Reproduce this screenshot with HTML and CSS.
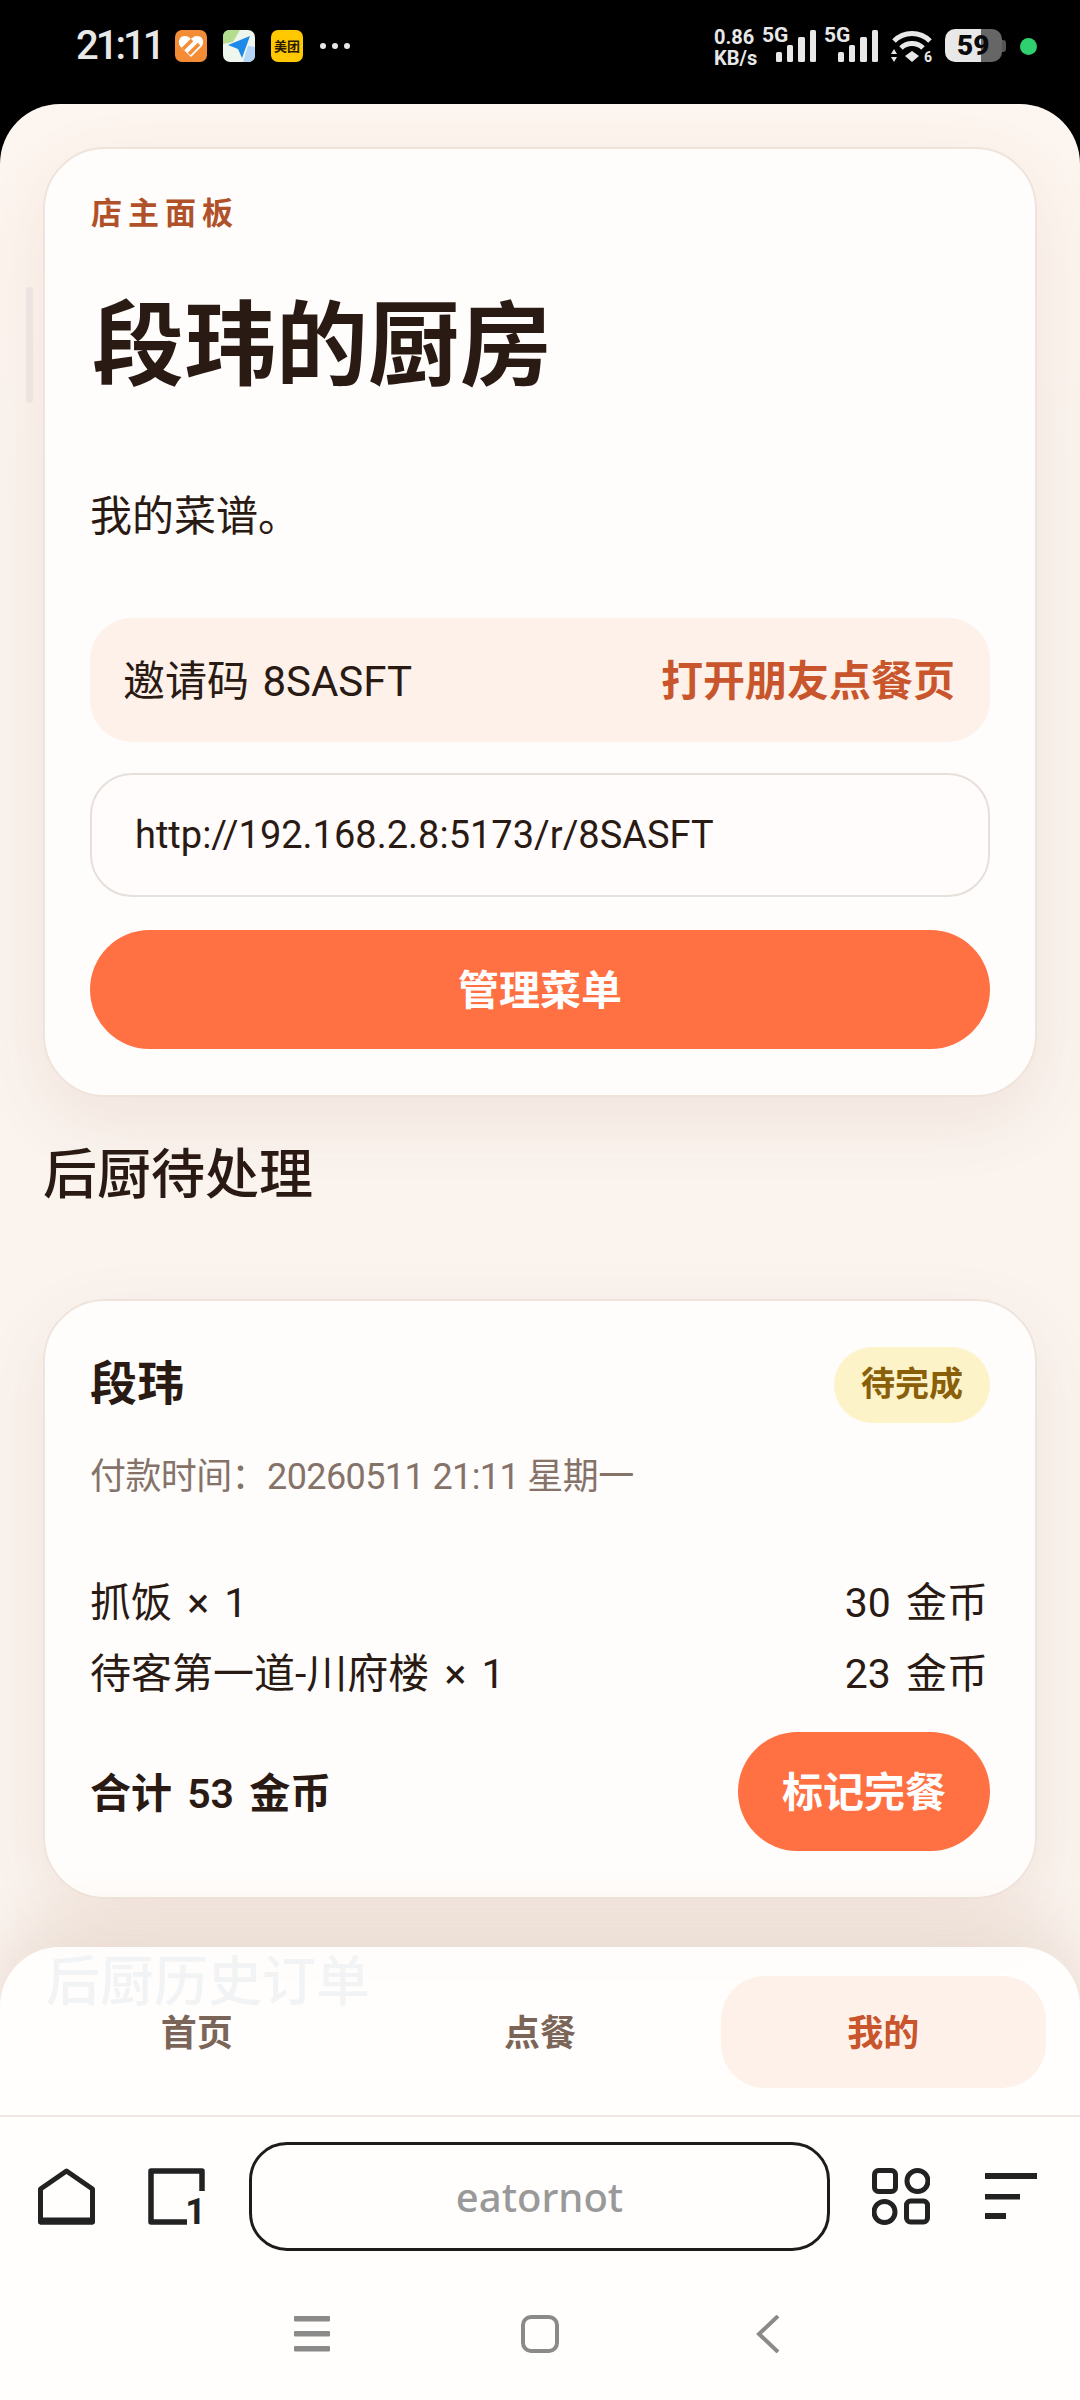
FILE: index.html
```html
<!DOCTYPE html>
<html lang="zh-CN">
<head>
  <meta charset="UTF-8">
  <meta name="viewport" content="width=device-width, initial-scale=1.0"/>
  <title>eatornot</title>
  <link rel="stylesheet" href="styles.css">
</head>
<body>

  <div class="status-bar">
    <div class="status-left">
      <span class="clock">21:11</span>
      <svg class="app-icon" viewBox="0 0 32 32">
        <rect width="32" height="32" rx="7" fill="#f48b35"/>
        <path d="M16 27 L5 16 C2 11 5 6 10 6 C13 6 15 8 16 9 C17 8 19 6 22 6 C27 6 30 11 27 16 Z" fill="#fff"/>
        <path d="M8 19 L17 10 M14 24 L24 14" stroke="#f48b35" stroke-width="3.5"/>
      </svg>
      <svg class="app-icon" viewBox="0 0 32 32">
        <rect width="32" height="32" rx="7" fill="#eef6ee"/>
        <path d="M0 7 Q0 0 7 0 H17 L10 12 L0 14 Z" fill="#b5dd8f"/>
        <path d="M20 32 L25 16 L32 17 V25 Q32 32 25 32 Z" fill="#b4d6f8"/>
        <path d="M5 15 L27 6 L19 28 L15 19 Z" fill="#1d8ae8"/>
      </svg>
      <div class="meituan">美团</div>
      <div class="more-dots"><i></i><i></i><i></i></div>
    </div>
    <div class="status-right">
      <div class="net-speed"><span>0.86</span><span>KB/s</span></div>
      <div class="sim">
        <span class="sim-label">5G</span>
        <svg class="signal" viewBox="0 0 41 32">
          <rect x="0" y="22" width="6" height="10" rx="1.5"/>
          <rect x="11" y="15" width="6" height="17" rx="1.5"/>
          <rect x="22" y="7" width="7" height="25" rx="1.5"/>
          <rect x="34" y="0" width="6" height="32" rx="1.5"/>
        </svg>
      </div>
      <div class="sim">
        <span class="sim-label">5G</span>
        <svg class="signal" viewBox="0 0 41 32">
          <rect x="0" y="22" width="6" height="10" rx="1.5"/>
          <rect x="11" y="15" width="6" height="17" rx="1.5"/>
          <rect x="22" y="7" width="7" height="25" rx="1.5"/>
          <rect x="34" y="0" width="6" height="32" rx="1.5"/>
        </svg>
      </div>
      <svg class="wifi" viewBox="0 0 44 38">
        <path d="M3 11 C13 1 29 1 39 11 M10 18 C16 12 26 12 32 18" fill="none" stroke="#e8e8e8" stroke-width="5"/>
        <path d="M21 21 L28 26 L21 32 L14 26 Z" fill="#e8e8e8"/>
        <path d="M3 19 L6 24 H0 Z M3 32 L0 27 H6 Z" fill="#e8e8e8"/>
        <text x="33" y="32" class="wifi-num">6</text>
      </svg>
      <div class="battery">
        <div class="battery-body"><span>59</span></div>
        <i class="battery-nub"></i>
      </div>
      <i class="green-dot"></i>
    </div>
  </div>

  <div class="web">
    <div class="scroll-ghost"></div>

    <section class="card owner-card">
      <p class="eyebrow">店主面板</p>
      <h1 class="title">段玮的厨房</h1>
      <p class="subtitle">我的菜谱。</p>
      <div class="invite">
        <span>邀请码 8SASFT</span>
        <a class="invite-link">打开朋友点餐页</a>
      </div>
      <div class="url-input">http://192.168.2.8:5173/r/8SASFT</div>
      <button class="primary-btn full">管理菜单</button>
    </section>

    <h2 class="section-title">后厨待处理</h2>

    <section class="card order-card">
      <div class="order-head">
        <span class="customer">段玮</span>
        <span class="badge">待完成</span>
      </div>
      <p class="paid-time">付款时间：20260511 21:11 星期一</p>
      <div class="order-lines">
        <div class="order-line"><span>抓饭 × 1</span><span>30 金币</span></div>
        <div class="order-line"><span>待客第一道-川府楼 × 1</span><span>23 金币</span></div>
      </div>
      <div class="order-foot">
        <span class="total">合计 53 金币</span>
        <button class="primary-btn done">标记完餐</button>
      </div>
    </section>

    <h2 class="section-title history">后厨历史订单</h2>

    <nav class="tabs">
      <a class="tab">首页</a>
      <a class="tab">点餐</a>
      <a class="tab active">我的</a>
    </nav>
  </div>

  <div class="browser-bar">
    <svg class="tool-icon home" viewBox="0 0 57 57">
      <path d="M28.5 3 L54.5 21 V54 H2.5 V21 Z" fill="none" stroke="#222" stroke-width="5" stroke-linejoin="round"/>
      <path d="M2 53 H55" stroke="#222" stroke-width="7"/>
    </svg>
    <svg class="tool-icon tabs-icon" viewBox="0 0 57 57">
      <path d="M39 54 H3 V3 H54 V23" fill="none" stroke="#222" stroke-width="5.5" stroke-linejoin="round"/>
      <text x="58" y="56" class="tabs-count">1</text>
    </svg>
    <div class="address">eatornot</div>
    <svg class="tool-icon grid" viewBox="0 0 58 57">
      <g fill="none" stroke="#222" stroke-width="5">
        <rect x="2.5" y="2.5" width="21" height="21" rx="4"/>
        <circle cx="45.5" cy="13" r="10.5"/>
        <circle cx="12.5" cy="44" r="10.5"/>
        <rect x="34.5" y="33" width="21" height="21" rx="4"/>
      </g>
    </svg>
    <svg class="tool-icon menu" viewBox="0 0 52 46">
      <rect x="0" y="0" width="52" height="6" fill="#222"/>
      <rect x="0" y="21" width="35" height="5.5" fill="#222"/>
      <rect x="0" y="40" width="21" height="6" fill="#222"/>
    </svg>
  </div>

  <div class="nav-bar">
    <div class="nav-cell">
      <svg class="nav-menu" viewBox="0 0 36 36">
        <rect y="0" width="36" height="5.5" rx="1" fill="#8a8a8a"/>
        <rect y="15" width="36" height="5.5" rx="1" fill="#8a8a8a"/>
        <rect y="30" width="36" height="5.5" rx="1" fill="#8a8a8a"/>
      </svg>
    </div>
    <div class="nav-cell">
      <svg class="nav-home" viewBox="0 0 38 38">
        <rect x="2" y="2" width="34" height="34" rx="8" fill="none" stroke="#8a8a8a" stroke-width="4"/>
      </svg>
    </div>
    <div class="nav-cell">
      <svg class="nav-back" viewBox="0 0 24 38">
        <path d="M22 1 L3 19 L22 37" fill="none" stroke="#8a8a8a" stroke-width="4"/>
      </svg>
    </div>
  </div>

</body>
</html>
```

FILE: styles.css
```css
:root {
  --ink: #2a1a14;
  --muted: #85736a;
  --accent: #ff7043;
  --accent-dark: #c9552d;
  --peach: #fdf1ea;
  --card: #fffdfb;
  --line: #efe4dc;
}

* {
  margin: 0;
  padding: 0;
  box-sizing: border-box;
}

body {
  width: 1080px;
  height: 2400px;
  overflow: hidden;
  background: #000;
  font-family: "Roboto", "Noto Sans CJK SC", sans-serif;
  color: var(--ink);
  display: flex;
  flex-direction: column;
}

/* status bar */
.status-bar {
  height: 104px;
  flex: none;
  display: flex;
  justify-content: space-between;
  padding: 27px 43px 0 76px;
  color: #e8e8e8;
}

.status-left {
  display: flex;
  align-items: flex-start;
}

.clock {
  font-family: "Roboto", sans-serif;
  font-size: 40px;
  font-weight: 500;
  letter-spacing: -3px;
  line-height: 38px;
  width: 99px;
}

.app-icon {
  width: 32px;
  height: 32px;
  margin: 3px 16px 0 0;
}

.meituan {
  width: 32px;
  height: 32px;
  margin-top: 3px;
  border-radius: 7px;
  background: #ffc800;
  color: #2a1a00;
  font-family: "Noto Sans CJK SC", sans-serif;
  font-size: 13px;
  font-weight: 700;
  line-height: 32px;
  text-align: center;
}

.more-dots {
  display: flex;
  gap: 6px;
  margin: 16px 0 0 17px;
}

.more-dots i {
  width: 6px;
  height: 6px;
  border-radius: 50%;
  background: #e8e8e8;
}

.status-right {
  display: flex;
  align-items: flex-start;
  font-family: "Roboto", sans-serif;
  font-weight: 700;
}

.net-speed {
  display: flex;
  flex-direction: column;
  font-size: 20px;
  line-height: 21px;
  width: 48px;
}

.sim {
  position: relative;
  width: 41px;
  height: 35px;
  margin-left: 14px;
}

.sim + .sim {
  margin-left: 21px;
}

.sim-label {
  position: absolute;
  left: -14px;
  top: 0;
  font-size: 21px;
  line-height: 17px;
}

.signal {
  position: absolute;
  left: 0;
  top: 3px;
  width: 41px;
  height: 32px;
  fill: #e8e8e8;
}

.wifi {
  width: 44px;
  height: 38px;
  margin: 3px -2px 0 12px;
}

.wifi-num {
  font-size: 14px;
  font-weight: 700;
  fill: #e8e8e8;
}

.battery {
  display: flex;
  align-items: center;
  margin: 2px 0 0 12px;
}

.battery-body {
  width: 57px;
  height: 33px;
  border-radius: 10px;
  background: linear-gradient(90deg, #e8e8e8 0 63%, #666 63% 100%);
  color: #0a0a0a;
  font-size: 28px;
  font-weight: 900;
  line-height: 33px;
  padding-left: 12px;
}

.battery-nub {
  width: 4px;
  height: 12px;
  border-radius: 0 3px 3px 0;
  background: #555;
}

.green-dot {
  width: 17px;
  height: 17px;
  margin: 11px 0 0 14px;
  border-radius: 50%;
  background: #2fd06f;
}

/* web view */
.web {
  position: relative;
  flex: none;
  height: 2013px;
  overflow: hidden;
  border-radius: 60px 60px 0 0;
  background: linear-gradient(180deg, #fdf5ef, #faf3ee 20%);
  padding: 43px 43px 0;
}

.scroll-ghost {
  position: absolute;
  left: 26px;
  top: 183px;
  width: 7px;
  height: 116px;
  border-radius: 4px;
  background: #efe9e6;
}

.card {
  position: relative;
  background: var(--card);
  border: 2px solid var(--line);
  border-radius: 62px;
  padding: 0 45px;
  box-shadow: 0 24px 70px rgba(150, 90, 50, 0.09);
}

.owner-card {
  height: 950px;
  padding-top: 44px;
}

.eyebrow {
  font-family: "Noto Sans CJK SC", sans-serif;
  font-size: 31px;
  font-weight: 700;
  letter-spacing: 6px;
  line-height: 40px;
  margin-left: 1px;
  margin-top: -2px;
  color: #b0512a;
}

.title {
  font-family: "Noto Sans CJK SC", sans-serif;
  font-size: 92px;
  font-weight: 700;
  line-height: 110px;
  margin-top: 52px;
  margin-left: 2px;
}

.subtitle {
  font-size: 42px;
  line-height: 60px;
  margin-top: 94px;
}

.invite {
  display: flex;
  justify-content: space-between;
  align-items: center;
  height: 124px;
  margin-top: 71px;
  padding: 0 35px 6px 33px;
  border-radius: 42px;
  background: var(--peach);
  font-size: 42px;
  word-spacing: 3px;
}

.invite-link {
  font-size: 42px;
  font-weight: 700;
  color: var(--accent-dark);
}

.url-input {
  display: flex;
  align-items: center;
  height: 124px;
  margin-top: 31px;
  padding-left: 43px;
  border: 2px solid #e6dfda;
  border-radius: 42px;
  background: #fffcfb;
  font-size: 38px;
}

.primary-btn {
  border: none;
  background: var(--accent);
  color: #fff;
  font-family: "Noto Sans CJK SC", sans-serif;
  font-size: 41px;
  font-weight: 700;
  padding-bottom: 5px;
}

.full {
  display: block;
  width: 100%;
  height: 119px;
  margin-top: 33px;
  border-radius: 60px;
}

.section-title {
  font-family: "Noto Sans CJK SC", sans-serif;
  font-size: 54px;
  font-weight: 500;
  line-height: 70px;
  margin-top: 39px;
}

.order-card {
  margin-top: 93px;
  height: 600px;
  padding-top: 46px;
}

.order-head {
  display: flex;
  justify-content: space-between;
  align-items: center;
}

.customer {
  font-family: "Noto Sans CJK SC", sans-serif;
  font-size: 47px;
  font-weight: 600;
  margin-top: -12px;
}

.badge {
  width: 156px;
  height: 76px;
  border-radius: 38px;
  background: #fdf3c8;
  color: #8a5f0a;
  font-size: 34px;
  font-weight: 600;
  line-height: 74px;
  text-align: center;
}

.paid-time {
  font-size: 36px;
  letter-spacing: -0.6px;
  line-height: 50px;
  margin-top: 29px;
  color: var(--muted);
}

.order-lines {
  display: flex;
  flex-direction: column;
  gap: 21px;
  margin-top: 76px;
}

.order-line {
  display: flex;
  justify-content: space-between;
  padding-right: 2px;
  font-size: 41px;
  line-height: 50px;
  word-spacing: 5px;
}

.order-foot {
  display: flex;
  justify-content: space-between;
  align-items: center;
  margin-top: 33px;
}

.total {
  font-size: 41px;
  font-weight: 600;
  word-spacing: 5px;
  padding-bottom: 4px;
}

.done {
  width: 252px;
  height: 119px;
  border-radius: 60px;
}

.history {
  margin-top: 44px;
  margin-left: 3px;
  color: #4a6a8a;
}

/* bottom tabs sit over the page */
.tabs {
  position: absolute;
  left: 0;
  right: 0;
  bottom: 0;
  height: 170px;
  display: grid;
  grid-template-columns: repeat(3, 1fr);
  gap: 18px;
  padding: 29px 34px 27px;
  border-radius: 60px 60px 0 0;
  border-bottom: 2px solid #efe5e2;
  background: rgba(255, 254, 253, 0.93);
  box-shadow: 0 -20px 60px rgba(150, 90, 50, 0.14);
}

.tab {
  display: flex;
  align-items: center;
  justify-content: center;
  border-radius: 44px;
  padding-bottom: 5px;
  font-size: 36px;
  font-weight: 600;
  color: #7a6558;
}

.tab.active {
  background: var(--peach);
  color: var(--accent-dark);
}

/* browser toolbar */
.browser-bar {
  flex: none;
  height: 134px;
  display: flex;
  padding: 25px 43px 0 38px;
  background: #fffefd;
}

.tool-icon {
  flex: none;
  margin-top: 26px;
}

.home,
.tabs-icon {
  width: 57px;
  height: 57px;
}

.tabs-icon {
  margin-left: 53px;
  overflow: visible;
}

.tabs-count {
  font-family: "Roboto", sans-serif;
  font-size: 36px;
  font-weight: 700;
  text-anchor: end;
  fill: #222;
}

.address {
  flex: 1;
  height: 109px;
  margin: 0 42px 0 44px;
  border: 3px solid #1c1c1c;
  border-radius: 38px;
  font-family: "Noto Sans", sans-serif;
  font-size: 40px;
  font-weight: 500;
  line-height: 103px;
  text-align: center;
  color: #999;
}

.grid {
  width: 58px;
  height: 57px;
}

.menu {
  width: 52px;
  height: 46px;
  margin: 31px 0 0 55px;
}

/* system nav */
.nav-bar {
  flex: 1;
  display: flex;
  justify-content: center;
  padding-top: 64px;
  background: #fffefd;
}

.nav-cell {
  width: 228px;
  height: 38px;
  display: flex;
  justify-content: center;
  align-items: center;
}

.nav-menu {
  width: 36px;
  height: 36px;
}

.nav-home {
  width: 38px;
  height: 38px;
}

.nav-back {
  width: 24px;
  height: 38px;
}
```
